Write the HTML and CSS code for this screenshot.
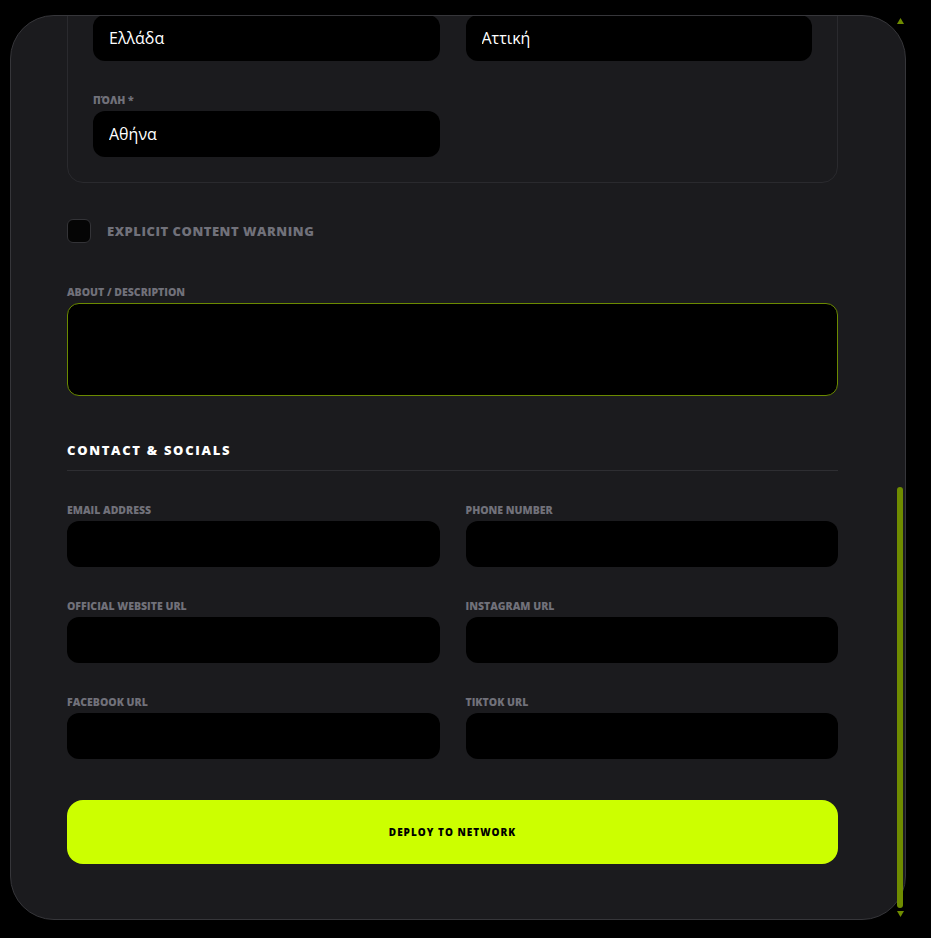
FILE: index.html
```html
<!DOCTYPE html>
<html lang="el">
<head>
    <meta charset="UTF-8">
    <meta name="viewport" content="width=device-width, initial-scale=1.0">
    <title>Register a Venue</title>
    <link rel="stylesheet" href="styles.css">
</head>
<body>
    <div class="page">
        <div class="modal">
            <div class="modal-scroll">
                <header class="modal-head">
                    <span class="eyebrow">New entry</span>
                    <h1>Register a Venue</h1>
                    <p>Fill in the details below. Fields marked * are required.</p>
                </header>

                <section class="form-section">
                    <h2 class="section-title">Identity</h2>
                    <div class="form-grid">
                        <div class="field">
                            <label for="name">Venue name *</label>
                            <input type="text" id="name">
                        </div>
                        <div class="field">
                            <label for="category">Category *</label>
                            <input type="text" id="category">
                        </div>
                        <div class="field">
                            <label for="capacity">Capacity</label>
                            <input type="text" id="capacity">
                        </div>
                        <div class="field">
                            <label for="hours">Opening hours</label>
                            <input type="text" id="hours">
                        </div>
                        <div class="field">
                            <label for="genres">Music genres</label>
                            <input type="text" id="genres">
                        </div>
                        <div class="field">
                            <label for="price">Entry price</label>
                            <input type="text" id="price">
                        </div>
                    </div>
                    <div class="field upload">
                        <label>Cover image</label>
                        <div class="dropzone">Drop an image here or click to browse</div>
                    </div>
                </section>

                <section class="form-section location">
                    <h2 class="section-title">Location</h2>
                    <div class="fieldset">
                        <div class="form-grid">
                            <div class="field">
                                <label for="country" class="keep-case">ΧΏΡΑ *</label>
                                <input type="text" id="country" value="Ελλάδα">
                            </div>
                            <div class="field">
                                <label for="region" class="keep-case">ΠΕΡΙΦΈΡΕΙΑ *</label>
                                <input type="text" id="region" value="Αττική">
                            </div>
                            <div class="field">
                                <label for="city" class="keep-case">ΠΌΛΗ *</label>
                                <input type="text" id="city" value="Αθήνα">
                            </div>
                        </div>
                    </div>
                </section>

                <label class="check-row">
                    <input type="checkbox">
                    <span>Explicit content warning</span>
                </label>

                <div class="field">
                    <label for="about">About / Description</label>
                    <textarea id="about"></textarea>
                </div>

                <section class="form-section contact">
                    <h2 class="section-title">Contact &amp; Socials</h2>
                    <div class="form-grid">
                        <div class="field">
                            <label for="email">Email address</label>
                            <input type="email" id="email">
                        </div>
                        <div class="field">
                            <label for="phone">Phone number</label>
                            <input type="text" id="phone">
                        </div>
                        <div class="field">
                            <label for="website">Official website URL</label>
                            <input type="text" id="website">
                        </div>
                        <div class="field">
                            <label for="instagram">Instagram URL</label>
                            <input type="text" id="instagram">
                        </div>
                        <div class="field">
                            <label for="facebook">Facebook URL</label>
                            <input type="text" id="facebook">
                        </div>
                        <div class="field">
                            <label for="tiktok">TikTok URL</label>
                            <input type="text" id="tiktok">
                        </div>
                    </div>
                </section>

                <button class="deploy">Deploy to network</button>
            </div>

            
            <div class="scrollbar">
                <svg class="arrow" width="7" height="6" viewBox="0 0 7 6"><polygon points="3.5,0 7,6 0,6"/></svg>
                <div class="track"><div class="thumb"></div></div>
                <svg class="arrow" width="7" height="6" viewBox="0 0 7 6"><polygon points="0,0 7,0 3.5,6"/></svg>
            </div>
        </div>
    </div>

    <script>
        const scroller = document.querySelector('.modal-scroll');
        scroller.scrollTop = scroller.scrollHeight;
    </script>
</body>
</html>
```

FILE: styles.css
```css
* {
    box-sizing: border-box;
}
body {
    margin: 0;
    background: #000;
    color: #fff;
    font-family: "Open Sans", "Noto Sans", sans-serif;
}
.page {
    padding: 15px 25px 18px 10px;
}
.modal {
    position: relative;
    width: 896px;
    height: 905px;
    background: #1b1b1e;
    border: 1px solid #36363a;
    border-radius: 44px;
}
.modal-scroll {
    height: 100%;
    overflow-y: auto;
    border-radius: 43px;
    padding: 56px 67px 55px 56px;
    scrollbar-width: none;
}
.scrollbar {
    position: absolute;
    top: 0;
    right: 0;
    bottom: 0;
    width: 11px;
    display: flex;
    flex-direction: column;
    align-items: center;
}
.scrollbar .arrow {
    flex: none;
    margin: 2px 0 3px 1px;
    fill: #6f8c00;
}
.scrollbar .arrow:last-child {
    margin: 3px 0 2px 1px;
}
.track {
    flex: 1;
    width: 100%;
    display: flex;
    flex-direction: column;
    justify-content: flex-end;
}
.thumb {
    height: 421px;
    margin: 0 2px 0 3px;
    border-radius: 3px;
    background: #6f8c00;
}
.modal-head {
    margin-bottom: 48px;
}
.eyebrow {
    display: block;
    font-size: 11px;
    font-weight: 700;
    letter-spacing: .2em;
    text-transform: uppercase;
    color: #ccff00;
    margin-bottom: 8px;
}
.modal-head h1 {
    margin: 0 0 8px;
    font-size: 28px;
    font-weight: 800;
}
.modal-head p {
    margin: 0;
    font-size: 14px;
    color: #71717a;
}
.form-section {
    margin-bottom: 48px;
}
.section-title {
    margin: 0 0 34px;
    padding-bottom: 13px;
    border-bottom: 1px solid #2e2e32;
    font-size: 13px;
    line-height: 13px;
    font-weight: 800;
    letter-spacing: .13em;
    text-transform: uppercase;
    color: #fff;
}
.form-grid {
    display: grid;
    grid-template-columns: 1fr 1fr;
    column-gap: 26px;
    row-gap: 34px;
}
.field label {
    display: block;
    margin-bottom: 5px;
    font-size: 10.5px;
    line-height: 11px;
    font-weight: 800;
    letter-spacing: 0;
    text-transform: uppercase;
    color: #71717a;
}
.field label.keep-case {
    text-transform: none;
}
.field input,
.field textarea {
    display: block;
    width: 100%;
    background: #000;
    border: none;
    border-radius: 12px;
    color: #fff;
    font-family: inherit;
    font-size: 16px;
    outline: none;
}
.field input {
    height: 46px;
    padding: 0 16px;
}
.field textarea {
    height: 93px;
    padding: 12px 16px;
    border: 1px solid #6b8a00;
    resize: none;
}
.upload {
    margin-top: 34px;
}
.dropzone {
    height: 194px;
    border: 1px dashed #34343a;
    border-radius: 16px;
    display: flex;
    align-items: center;
    justify-content: center;
    font-size: 13px;
    color: #71717a;
}
.fieldset {
    border: 1px solid #2a2a2e;
    border-radius: 16px;
    padding: 25px;
}
.location {
    margin-bottom: 36px;
}
.check-row {
    display: flex;
    align-items: center;
    gap: 16px;
    margin-bottom: 44px;
    cursor: pointer;
}
.check-row input {
    appearance: none;
    margin: 0;
    width: 24px;
    height: 24px;
    background: #050505;
    border: 1px solid #333337;
    border-radius: 6px;
}
.check-row span {
    font-size: 13px;
    font-weight: 800;
    letter-spacing: .04em;
    text-transform: uppercase;
    color: #71717a;
}
.contact {
    margin-top: 48px;
    margin-bottom: 41px;
}
.deploy {
    display: block;
    width: 100%;
    height: 64px;
    border: none;
    border-radius: 16px;
    background: #ccff00;
    color: #000;
    font-family: inherit;
    font-size: 10px;
    font-weight: 800;
    letter-spacing: .1em;
    text-transform: uppercase;
    cursor: pointer;
}
```
